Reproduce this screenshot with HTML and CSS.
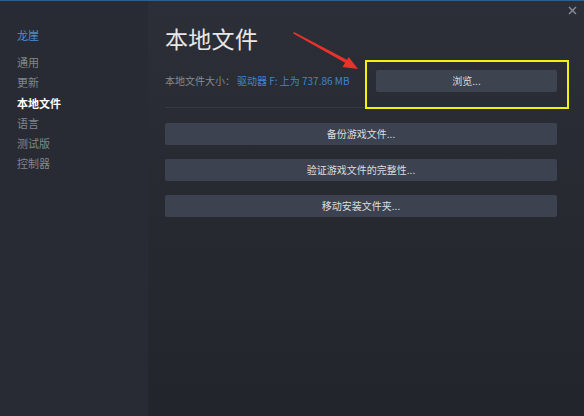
FILE: index.html
```html
<!DOCTYPE html>
<html lang="zh-CN">
<head>
<meta charset="utf-8">
<title>本地文件</title>
<link rel="stylesheet" href="styles.css">
</head>
<body>
<div class="window">
  <nav class="sidebar">
    <div class="game">龙崖</div>
    <ul class="menu">
      <li>通用</li>
      <li>更新</li>
      <li class="active">本地文件</li>
      <li>语言</li>
      <li>测试版</li>
      <li>控制器</li>
    </ul>
  </nav>
  <main class="content">
    <button class="close" aria-label="关闭">
      <svg width="9" height="9" viewBox="0 0 9 9"><path d="M1 1L8 8M8 1L1 8" stroke="#8a9099" stroke-width="1.4" fill="none"/></svg>
    </button>
    <svg class="arrow" width="584" height="120" viewBox="0 0 584 120">
      <polygon points="294,32 349.2,61 346.4,63.4 293.2,33.6" fill="#e8322b"/>
      <polygon points="358,69 342.5,67 348.8,57" fill="#e8322b"/>
    </svg>
    <h1 class="title">本地文件</h1>
    <div class="size-row">
      <span class="label">本地文件大小：</span>
      <span class="value">驱动器 F: 上为 737.86 MB</span>
      <div class="browse-wrap">
        <button class="btn browse">浏览...</button>
        <div class="highlight"></div>
      </div>
    </div>
    <div class="actions">
      <button class="btn">备份游戏文件...</button>
      <button class="btn">验证游戏文件的完整性...</button>
      <button class="btn">移动安装文件夹...</button>
    </div>
  </main>
</div>
</body>
</html>
```

FILE: styles.css
```css
* { box-sizing: border-box; }
html, body {
  margin: 0;
  padding: 0;
  width: 584px;
  height: 416px;
  overflow: hidden;
  background: #24272e;
  font-family: "Noto Sans CJK SC", "Noto Sans", "Liberation Sans", sans-serif;
}
.window {
  display: flex;
  width: 584px;
  height: 416px;
  border-top: 1px solid #2f5f8f;
}
.sidebar {
  width: 148px;
  flex: none;
  background: #282b33;
  padding: 24px 0 0 17px;
}
.game {
  color: #4b8fd3;
  font-size: 11px;
  line-height: 21px;
  margin-bottom: 6px;
}
.menu {
  list-style: none;
  margin: 0;
  padding: 0;
}
.menu li {
  color: #80868e;
  font-size: 11px;
  line-height: 20.3px;
}
.menu li.active {
  color: #ffffff;
  font-weight: bold;
}
.content {
  position: relative;
  flex: 1;
  background: linear-gradient(180deg, #2c2f37 0%, #272a31 45%, #22252b 100%);
  padding: 22px 27px 0 17px;
}
.close {
  position: absolute;
  top: 4px;
  right: 6px;
  width: 11px;
  height: 11px;
  padding: 0;
  border: 0;
  background: none;
  display: flex;
  align-items: center;
  justify-content: center;
}
.arrow {
  position: absolute;
  left: -148px;
  top: -1px;
  pointer-events: none;
  z-index: 2;
}
.title {
  margin: 0;
  color: #e6e7e8;
  font-size: 23px;
  font-weight: normal;
  line-height: 30px;
  letter-spacing: 0.3px;
}
.size-row {
  display: flex;
  align-items: center;
  margin-top: 17px;
  height: 22px;
  font-size: 10px;
  line-height: 22px;
}
.label {
  color: #858b93;
  margin-right: 2px;
}
.value {
  color: #3f86cc;
}
.browse-wrap {
  position: relative;
  margin-left: auto;
  width: 181px;
}
.btn {
  display: block;
  width: 100%;
  height: 22px;
  border: 0;
  border-radius: 2px;
  background: #3d4250;
  color: #dcdedf;
  font-family: inherit;
  font-size: 10px;
  line-height: 22px;
  padding: 0;
  text-align: center;
}
.browse {
  background: #3e4350;
}
.highlight {
  position: absolute;
  left: -11px;
  right: -12px;
  top: -10px;
  bottom: -17px;
  border: 2px solid #f2f20f;
}
.actions {
  margin-top: 15px;
  border-top: 1px solid #353941;
  padding-top: 15px;
  display: flex;
  flex-direction: column;
  gap: 14px;
}
```
